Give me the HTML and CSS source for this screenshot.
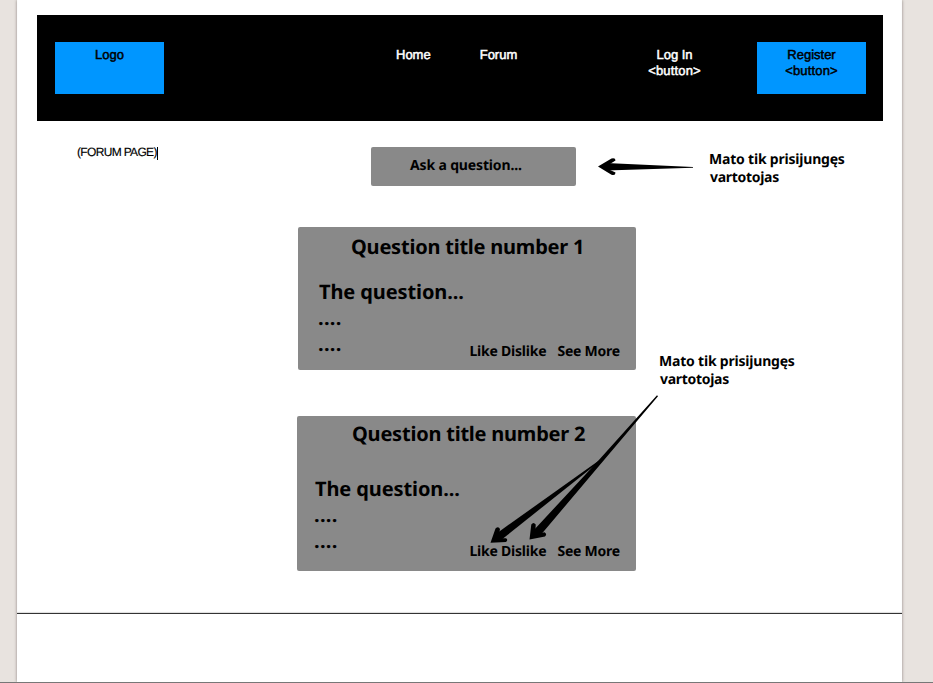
FILE: index.html
```html
<!DOCTYPE html>
<html lang="lt">
<head>
<meta charset="utf-8">
<title>Forum page</title>
<link rel="stylesheet" href="styles.css">
</head>
<body>
<div class="page">
  <main class="sheet">
    <header class="header">
      <div class="box"><span class="t-logo">Logo</span></div>
      <nav class="nav"><span class="t-home">Home</span><span class="t-forum">Forum</span></nav>
      <div class="login"><span class="t-login">Log In</span><span class="t-button">&lt;button&gt;</span></div>
      <div class="box"><span class="t-register">Register</span><span class="t-button">&lt;button&gt;</span></div>
    </header>
    <section class="intro">
      <div class="label">(FORUM PAGE)<i class="caret"></i></div>
      <div class="ask"><span>Ask a question...</span></div>
      <p class="note"><span class="n1">Mato tik prisijungęs</span><span class="n2">vartotojas</span></p>
    </section>
    <article class="card first">
      <h2>Question title number 1</h2>
      <div class="body"><span class="lead">The question...</span><span class="dots">....</span><span class="dots">....</span></div>
      <footer><span class="like">Like Dislike</span><span class="more">See More</span></footer>
    </article>
    <article class="card second">
      <h2>Question title number 2</h2>
      <div class="body"><span class="lead">The question...</span><span class="dots">....</span><span class="dots">....</span></div>
      <footer><span class="like">Like Dislike</span><span class="more">See More</span></footer>
    </article>
  </main>
</div>
<p class="note floating"><span class="n1">Mato tik prisijungęs</span><span class="n2">vartotojas</span></p>
<svg class="arrows" width="933" height="683" viewBox="0 0 933 683">
  <g class="shaft">
    <path d="M693 167L606 163V170.500L693 167.800Z"/>
    <path d="M657 395.300L598 461L533 531L539 537L601.500 463L658 396.300Z"/>
    <path d="M600 459.700L496.500 533.500L500.500 540.500L600 461.200Z"/>
  </g>
  <g class="tip">
    <path d="M598 166.500L611.500 158.500Q615.500 157.500 615.500 160.500L609.500 164.200V169.800L615.500 172.500Q615.500 176 611.500 174.700Z"/>
    <path d="M529.500 539.500L531.300 524.500Q533.500 521.500 535.700 524.500L535.500 530L539.500 533.500L544.500 532.300Q547.500 534 545 536.500Z"/>
    <path d="M490.500 542.800L495.500 528.500Q498.500 526 500 529L499 534.500L502 538.300L506 538.300Q508.500 540 506 542Z"/>
  </g>
</svg>
</body>
</html>
```

FILE: styles.css
```css
* { box-sizing: border-box; }
body {
  margin: 0;
  position: relative;
  width: 933px;
  height: 683px;
  overflow: hidden;
  background: #e8e3df;
  border-bottom: 1px solid #777;
  color: #000;
  font-family: "Noto Sans", "Open Sans", sans-serif;
  text-rendering: geometricPrecision;
}
.page {
  width: 885px;
  height: 682px;
  margin-left: 17px;
  background: #fff;
  box-shadow: 0 0 3px #8c8580;
}
.sheet {
  height: 614px;
  padding: 15px 19px 0 20px;
  border-bottom: 1px solid #333;
  box-shadow: inset 0 -1px 1px #ddd;
}
.header {
  display: grid;
  grid-template-columns: 109px 1fr 109px 109px;
  height: 106px;
  padding: 27px 17px 27px 18px;
  background: #000;
  color: #fff;
  font: 13px/16px "Liberation Sans", sans-serif;
  -webkit-text-stroke: 0.5px currentColor;
}
.header span { display: block; width: max-content; }
.header .t-button { letter-spacing: 0.15px; }
.box {
  display: flex;
  flex-direction: column;
  align-items: center;
  padding-top: 5px;
  background: #0096ff;
  color: #000;
}
.nav { display: flex; gap: 49px; padding: 5px 0 0 232px; }
.login {
  display: flex;
  flex-direction: column;
  align-items: center;
  padding-top: 5px;
  width: 109px;
  justify-self: end;
  margin-right: 28px;
}
.intro {
  display: grid;
  grid-template-columns: 294px 205px 1fr;
  align-items: start;
  height: 106px;
  padding: 26px 0 0 40px;
}
.label {
  display: flex;
  align-items: center;
  height: 14px;
  margin-top: -2px;
  font: 12px/14px "Liberation Sans", sans-serif;
  letter-spacing: -0.67px;
  -webkit-text-stroke: 0.15px currentColor;
}
.caret { width: 1px; height: 13px; margin-top: 2px; background: #000; }
.ask {
  height: 39px;
  padding-left: 39px;
  border-radius: 2px;
  background: #898989;
  font-size: 14px;
  font-weight: 700;
  line-height: 37px;
  letter-spacing: -0.15px;
}
.note {
  margin: 4px 0 0 133px;
  font-size: 14px;
  font-weight: 700;
  line-height: 18px;
  letter-spacing: -0.2px;
}
.note span { display: block; width: max-content; }
.n2 { margin-left: 1px; letter-spacing: -0.3px; }
.note.floating { position: absolute; left: 659px; top: 353px; margin: 0; }
.card {
  display: flex;
  flex-direction: column;
  border-radius: 2px;
  background: #898989;
  font-weight: 700;
}
.first { width: 338px; height: 143px; margin-left: 261px; padding: 7px 16px 0 21px; }
.second { width: 339px; height: 155px; margin: 46px 0 0 260px; padding: 5px 16px 0 18px; }
h2 { margin: 0 0 0 32px; font-size: 20px; line-height: 26px; letter-spacing: -0.22px; white-space: nowrap; }
.second h2 { margin-left: 37px; }
.body { display: flex; flex-direction: column; margin-top: 19px; font-size: 20px; line-height: 26px; }
.second .body { margin-top: 29px; }
.lead { height: 26px; width: max-content; letter-spacing: -0.1px; }
.dots { width: max-content; height: 26px; margin-left: -1px; letter-spacing: 0.3px; }
.card footer { display: flex; justify-content: flex-end; gap: 11px; margin-top: -14px; font-size: 14px; line-height: 18px; letter-spacing: -0.22px; white-space: nowrap; }
.second footer { margin-top: -11px; }
.arrows { position: absolute; left: 0; top: 0; fill: #000; }
```
